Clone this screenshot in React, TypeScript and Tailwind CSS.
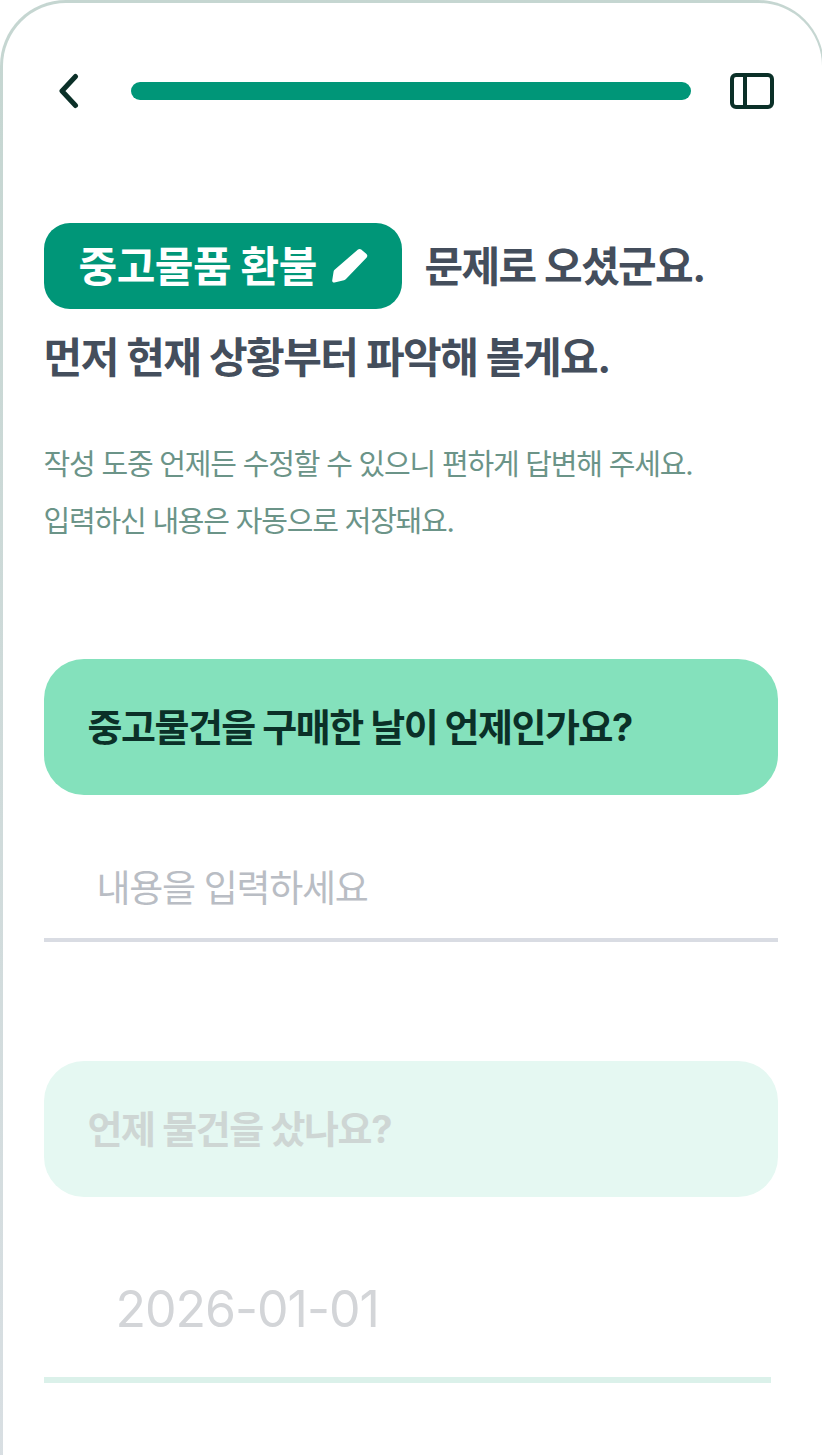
export default function App() {
  return (
    <div className="w-[822px] h-[1455px] overflow-hidden bg-white font-['Inter','Noto_Sans_CJK_KR',sans-serif]">
      <div className="h-[1500px] w-[824px] rounded-t-[66px] bg-gradient-to-b from-[#c5d6d1] to-[#d9dfe3] pt-[3px] pl-[2.5px] pr-[2px]">
        <div className="h-full rounded-t-[63px] bg-white pt-[68px] pl-[41px] pr-[44px]">
          <header className="flex h-[40px] items-center">
            <svg className="ml-[6.5px] h-[36px] w-[36px] shrink-0" viewBox="0 0 36 36" fill="none">
              <path d="M25.5 3.5 L12 18 L25.5 32.5" stroke="#0b3028" strokeWidth="5" strokeLinecap="round" strokeLinejoin="round" />
            </svg>
            <div className="ml-[45px] h-[18px] w-[560px] rounded-full bg-[#009678]" />
            <svg className="ml-[39px] h-[36px] w-[44px] shrink-0" viewBox="0 0 44 36" fill="none">
              <rect x="2" y="2" width="40" height="32" rx="4" stroke="#0b3028" strokeWidth="4" />
              <path d="M15 2 V34" stroke="#0b3028" strokeWidth="4" />
            </svg>
          </header>

          <div className="mt-[112px] flex items-center">
            <div className="flex h-[86px] w-[358px] items-center rounded-[26px] bg-[#009678] pl-[35px]">
              <span className="whitespace-nowrap text-[42px] font-bold tracking-[-0.5px] text-white">중고물품 환불</span>
              <svg className="ml-[14px] h-[36px] w-[38px] shrink-0" viewBox="0 0 38 36" fill="#fff">
                <path d="M27 1.5 C28 .8 29.3 .8 30.2 1.5 L35.5 6 C36.5 7 36.6 8.4 35.7 9.4 L15 31 C14.4 31.6 13.7 32 13 32.2 L3.5 34.4 C2.2 34.7 1 33.7 1.2 32.4 L2.6 23.6 C2.7 22.8 3.1 22.2 3.6 21.7 Z" />
              </svg>
            </div>
            <span className="ml-[23px] whitespace-nowrap text-[42px] font-bold tracking-[-1.6px] text-[#444e5c]">문제로 오셨군요.</span>
          </div>
          <p className="mt-[22px] text-[42px] font-bold leading-[54px] tracking-[-1.5px] text-[#444e5c]">먼저 현재 상황부터 파악해 볼게요.</p>

          <p className="mt-[51px] text-[29px] leading-[57px] tracking-[-1.2px] text-[#6b9488]">작성 도중 언제든 수정할 수 있으니 편하게 답변해 주세요.<br />입력하신 내용은 자동으로 저장돼요.</p>

          <section className="mt-[109px] flex h-[136px] w-[734px] items-center rounded-[40px] bg-[#84e1bc] pl-[44px]">
            <span className="text-[38px] font-bold tracking-[-1.5px] text-[#0b3028]">중고물건을 구매한 날이 언제인가요?</span>
          </section>
          <div className="flex h-[147px] w-[734px] items-center border-b-[4px] border-[#d9dce3] pl-[53px] pt-[44px]">
            <span className="text-[37px] tracking-[-1.3px] text-[#b9bdc4]">내용을 입력하세요</span>
          </div>

          <section className="mt-[119px] flex h-[136px] w-[734px] items-center rounded-[40px] bg-[#e5f8f2] pl-[44px]">
            <span className="text-[38px] font-bold tracking-[-1.4px] text-[#ced6d4]">언제 물건을 샀나요?</span>
          </section>
          <div className="flex h-[186px] w-[727px] items-center border-b-[6px] border-[#dbf1ea] pl-[72px] pt-[44px]">
            <span className="text-[50px] tracking-[-1px] text-[#d3d5d8]">2026-01-01</span>
          </div>
        </div>
      </div>
    </div>
  );
}
